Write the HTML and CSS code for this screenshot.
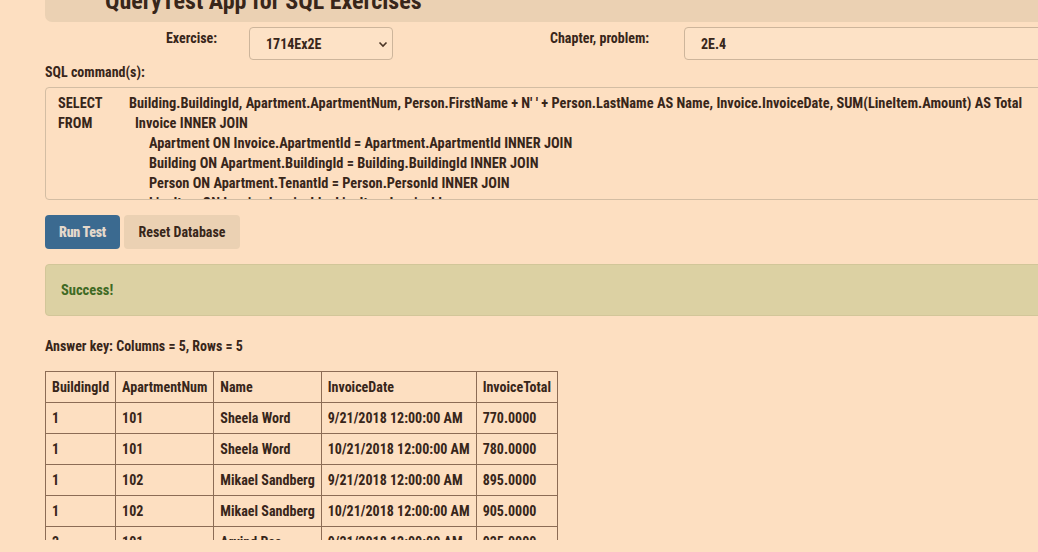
FILE: index.html
```html
<!DOCTYPE html>
<html>
<head>
<meta charset="utf-8">
<title>QueryTest App for SQL Exercises</title>
<link rel="stylesheet" href="styles.css">
</head>
<body>
<div class="page">
  <div class="container">
    <header class="app-header">
      <h1 class="app-title">QueryTest App for SQL Exercises</h1>
    </header>

    <div class="picker-row">
      <div class="picker">
        <label class="picker-label">Exercise:</label>
        <div class="select-box">
          <span>1714Ex2E</span>
          <svg class="chevron" width="10" height="7" viewBox="0 0 10 7"><path d="M1.5 1.5 L5 5 L8.5 1.5" fill="none" stroke="#4a3526" stroke-width="1.6"/></svg>
        </div>
      </div>
      <div class="picker picker-right">
        <label class="picker-label">Chapter, problem:</label>
        <div class="text-box">2E.4</div>
      </div>
    </div>

    <div class="sql-label">SQL command(s):</div>
    <div class="sql-box">
      <div class="sql-line"><span class="kw kw-select">SELECT</span>Building.BuildingId, Apartment.ApartmentNum, Person.FirstName + N' ' + Person.LastName AS Name, Invoice.InvoiceDate, SUM(LineItem.Amount) AS Total</div>
      <div class="sql-line"><span class="kw kw-from">FROM</span>Invoice INNER JOIN</div>
      <div class="sql-line indent">Apartment ON Invoice.ApartmentId = Apartment.ApartmentId INNER JOIN</div>
      <div class="sql-line indent">Building ON Apartment.BuildingId = Building.BuildingId INNER JOIN</div>
      <div class="sql-line indent">Person ON Apartment.TenantId = Person.PersonId INNER JOIN</div>
      <div class="sql-line indent">LineItem ON Invoice.InvoiceId = LineItem.InvoiceId</div>
    </div>

    <div class="buttons">
      <button class="btn btn-primary">Run Test</button>
      <button class="btn btn-secondary">Reset Database</button>
    </div>

    <div class="alert-success">Success!</div>

    <div class="answer-key">Answer key: Columns = 5, Rows = 5</div>

    <table class="results">
      <thead>
        <tr><th>BuildingId</th><th>ApartmentNum</th><th>Name</th><th>InvoiceDate</th><th>InvoiceTotal</th></tr>
      </thead>
      <tbody>
        <tr><td>1</td><td>101</td><td>Sheela Word</td><td>9/21/2018 12:00:00 AM</td><td>770.0000</td></tr>
        <tr><td>1</td><td>101</td><td>Sheela Word</td><td>10/21/2018 12:00:00 AM</td><td>780.0000</td></tr>
        <tr><td>1</td><td>102</td><td>Mikael Sandberg</td><td>9/21/2018 12:00:00 AM</td><td>895.0000</td></tr>
        <tr><td>1</td><td>102</td><td>Mikael Sandberg</td><td>10/21/2018 12:00:00 AM</td><td>905.0000</td></tr>
        <tr><td>2</td><td>101</td><td>Arvind Rao</td><td>9/21/2018 12:00:00 AM</td><td>925.0000</td></tr>
      </tbody>
    </table>
  </div>
</div>
</body>
</html>
```

FILE: styles.css
```css
html, body {
  margin: 0;
  padding: 0;
  background: #fddfc1;
  overflow: hidden;
}

.page {
  height: 540px;
  overflow: hidden;
  font-family: Roboto, "DejaVu Sans Condensed", sans-serif;
  font-stretch: 75%;
  font-weight: bold;
  font-size: 14px;
  color: #38261a;
}

.container {
  width: 1100px;
  margin-left: 45px;
}

.app-header {
  margin-top: -30px;
  height: 52px;
  background: #ebd1b3;
  border-radius: 0 0 7px 7px;
  display: flex;
  align-items: flex-end;
}

.app-title {
  margin: 0 0 6px 60px;
  font-size: 24px;
  line-height: 30px;
  font-weight: bold;
  color: #38261a;
}

.picker-row {
  display: flex;
  margin-top: 5px;
  height: 34px;
}

.picker {
  display: flex;
  align-items: flex-start;
}

.picker-label {
  margin-left: 121px;
  margin-top: 3px;
  width: 83px;
  font-size: 14px;
}

.select-box {
  width: 144px;
  height: 33px;
  box-sizing: border-box;
  border: 1px solid #cdb59b;
  border-radius: 4px;
  background: #fde2c6;
  display: flex;
  align-items: center;
  justify-content: space-between;
  padding: 0 4px 0 16px;
}

.chevron {
  margin-top: 1px;
}

.picker-right .picker-label {
  margin-left: 157px;
  width: 134px;
}

.text-box {
  width: 420px;
  height: 33px;
  box-sizing: border-box;
  border: 1px solid #cdb59b;
  border-radius: 4px;
  background: #fde2c6;
  display: flex;
  align-items: center;
  padding-left: 16px;
}

.sql-label {
  margin-top: 1px;
  line-height: 20px;
}

.sql-box {
  margin-top: 5px;
  height: 113px;
  box-sizing: border-box;
  border: 1px solid #d3bda3;
  border-radius: 4px;
  padding: 6px 12px 0;
  overflow: hidden;
  font-size: 14.35px;
}

.sql-line {
  line-height: 20px;
  white-space: nowrap;
}

.kw {
  display: inline-block;
}

.kw-select { width: 71px; }
.kw-from { width: 77px; }

.indent { padding-left: 91px; }

.buttons {
  display: flex;
  gap: 4px;
  margin-top: 15px;
}

.btn {
  font-family: inherit;
  font-stretch: inherit;
  font-weight: bold;
  font-size: 14px;
  height: 34px;
  border: none;
  border-radius: 4px;
  padding: 0;
  color: #38261a;
}

.btn-primary {
  background: #3b6a90;
  color: #e4d8cb;
  width: 75px;
  font-weight: 900;
  letter-spacing: -0.3px;
}

.btn-secondary {
  background: #ebd1b3;
  width: 116px;
}

.alert-success {
  margin-top: 15px;
  height: 52px;
  box-sizing: border-box;
  background: #dcd1a3;
  border: 1px solid #d2c699;
  border-radius: 4px;
  padding-left: 15px;
  display: flex;
  align-items: center;
  color: #3f6a24;
  font-size: 14.5px;
}

.answer-key {
  margin-top: 20px;
  line-height: 20px;
}

.results {
  margin-top: 15px;
  border-collapse: collapse;
  font-size: 14.05px;
}

.results th,
.results td {
  border: 1px solid #8c6c55;
  height: 31px;
  padding: 0 6px;
  text-align: left;
  white-space: nowrap;
  box-sizing: border-box;
}
```
